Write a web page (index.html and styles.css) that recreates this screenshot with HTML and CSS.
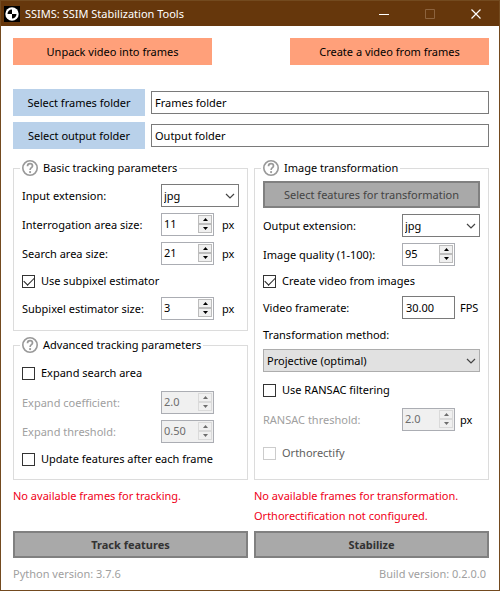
FILE: index.html
```html
<!DOCTYPE html>
<html lang="en">
<head>
<meta charset="utf-8">
<title>SSIMS: SSIM Stabilization Tools</title>
<link rel="stylesheet" href="styles.css">
</head>
<body>
<svg class="defs" aria-hidden="true">
  <symbol id="chevron" viewBox="0 0 10 6"><path d="M1 1l4 4 4-4" fill="none" stroke="currentColor" stroke-width="1.2"/></symbol>
  <symbol id="up" viewBox="0 0 5 3"><path d="M0 3L2.500 0 5 3z" fill="currentColor"/></symbol>
  <symbol id="down" viewBox="0 0 5 3"><path d="M0 0h5L2.500 3z" fill="currentColor"/></symbol>
  <symbol id="help" viewBox="0 0 16 16"><circle cx="8" cy="8" r="7.200" fill="none" stroke="#999" stroke-width="1.600"/><path d="M5.500 6.200C5.500 4.400 6.500 3.700 8 3.700s2.500.8 2.500 2.200c0 1.800-2.400 1.800-2.400 4" fill="none" stroke="#999" stroke-width="1.700"/><circle cx="8.100" cy="12.100" r="1.100" fill="#999"/></symbol>
</svg>
<div class="window">
  <header class="titlebar">
    <svg class="logo" viewBox="0 0 16 16" aria-hidden="true"><path d="M0 0h16v16H0z" fill="#000"/><circle cx="8" cy="8" r="6.700" fill="#fff"/><path d="M8 8V3.500A4.500 4.500 0 0 0 3.500 8zM8 8v4.500A4.500 4.500 0 0 0 12.500 8z" fill="#000"/></svg>
    <h1>SSIMS: SSIM Stabilization Tools</h1>
    <button class="caption" aria-label="Minimize"><svg viewBox="0 0 10 10"><path d="M0 5.500h10" stroke="#fff"/></svg></button>
    <button class="caption" aria-label="Maximize" disabled><svg viewBox="0 0 10 10"><path d="M.5.5h9v9h-9z" fill="none" stroke="#8c633e"/></svg></button>
    <button class="caption" aria-label="Close"><svg viewBox="0 0 10 10"><path d="M.5.500l9 9M9.500.500l-9 9" stroke="#fff" stroke-width="1.200"/></svg></button>
  </header>
  <main>
    <div class="video-actions">
      <button class="btn salmon">Unpack video into frames</button>
      <button class="btn salmon">Create a video from frames</button>
    </div>
    <div class="folders">
      <button class="btn blue">Select frames folder</button>
      <input class="text" type="text" aria-label="Frames folder" value="Frames folder">
      <button class="btn blue">Select output folder</button>
      <input class="text" type="text" aria-label="Output folder" value="Output folder">
    </div>
    <div class="columns">
      <div class="column">
        <fieldset>
          <legend><svg><use href="#help"/></svg>Basic tracking parameters</legend>
          <div class="rows">
            <div class="row"><label for="in-ext">Input extension:</label><span class="combo"><select id="in-ext"><option>jpg</option></select><svg><use href="#chevron"/></svg></span></div>
            <div class="row"><label for="ia">Interrogation area size:</label><span class="spin"><input id="ia" type="number" value="11"><span class="arrows"><button aria-label="Increase"><svg><use href="#up"/></svg></button><button aria-label="Decrease"><svg><use href="#down"/></svg></button></span></span><span class="unit">px</span></div>
            <div class="row"><label for="sa">Search area size:</label><span class="spin"><input id="sa" type="number" value="21"><span class="arrows"><button aria-label="Increase"><svg><use href="#up"/></svg></button><button aria-label="Decrease"><svg><use href="#down"/></svg></button></span></span><span class="unit">px</span></div>
            <label class="check"><input type="checkbox" checked>Use subpixel estimator</label>
            <div class="row"><label for="se">Subpixel estimator size:</label><span class="spin"><input id="se" type="number" value="3"><span class="arrows"><button aria-label="Increase"><svg><use href="#up"/></svg></button><button aria-label="Decrease"><svg><use href="#down"/></svg></button></span></span><span class="unit">px</span></div>
          </div>
        </fieldset>
        <fieldset class="grow">
          <legend><svg><use href="#help"/></svg>Advanced tracking parameters</legend>
          <div class="rows">
            <label class="check roomy"><input type="checkbox">Expand search area</label>
            <div class="row off"><label for="ec">Expand coefficient:</label><span class="spin"><input id="ec" type="number" step="0.1" value="2.0" disabled><span class="arrows"><button aria-label="Increase" disabled><svg><use href="#up"/></svg></button><button aria-label="Decrease" disabled><svg><use href="#down"/></svg></button></span></span></div>
            <div class="row off"><label for="et">Expand threshold:</label><span class="spin"><input id="et" type="number" step="0.01" value="0.50" disabled><span class="arrows"><button aria-label="Increase" disabled><svg><use href="#up"/></svg></button><button aria-label="Decrease" disabled><svg><use href="#down"/></svg></button></span></span></div>
            <label class="check"><input type="checkbox">Update features after each frame</label>
          </div>
        </fieldset>
      </div>
      <div class="column">
        <fieldset class="transform grow">
          <legend><svg><use href="#help"/></svg>Image transformation</legend>
          <div class="rows">
            <button class="btn gray" disabled>Select features for transformation</button>
            <div class="row"><label for="out-ext">Output extension:</label><span class="combo"><select id="out-ext"><option>jpg</option></select><svg><use href="#chevron"/></svg></span></div>
            <div class="row"><label for="iq">Image quality (1-100):</label><span class="spin"><input id="iq" type="number" value="95"><span class="arrows"><button aria-label="Increase"><svg><use href="#up"/></svg></button><button aria-label="Decrease"><svg><use href="#down"/></svg></button></span></span></div>
            <label class="check snug"><input type="checkbox" checked>Create video from images</label>
            <div class="row"><label for="fps">Video framerate:</label><input class="text short" id="fps" type="text" value="30.00"><span class="unit">FPS</span></div>
            <label class="heading" for="method">Transformation method:</label>
            <span class="combo flat"><select id="method"><option>Projective (optimal)</option></select><svg><use href="#chevron"/></svg></span>
            <label class="check roomy"><input type="checkbox">Use RANSAC filtering</label>
            <div class="row off"><label for="rt">RANSAC threshold:</label><span class="spin"><input id="rt" type="number" step="0.1" value="2.0" disabled><span class="arrows"><button aria-label="Increase" disabled><svg><use href="#up"/></svg></button><button aria-label="Decrease" disabled><svg><use href="#down"/></svg></button></span></span><span class="unit">px</span></div>
            <label class="check last dim"><input type="checkbox" disabled>Orthorectify</label>
          </div>
        </fieldset>
      </div>
    </div>
    <div class="status">
      <p>No available frames for tracking.</p>
      <p>No available frames for transformation.<br>Orthorectification not configured.</p>
    </div>
    <div class="run">
      <button class="btn gray strong" disabled>Track features</button>
      <button class="btn gray strong" disabled>Stabilize</button>
    </div>
    <footer><span>Python version: 3.7.6</span><span>Build version: 0.2.0.0</span></footer>
  </main>
</div>
</body>
</html>
```
FILE: styles.css
```css
* { box-sizing: border-box; }

body {
  margin: 0;
  background: #fff;
  color: #000;
  font: 11px/16px "Segoe UI", "Noto Sans", sans-serif;
}

button, input, select { font: inherit; color: inherit; margin: 0; }
h1, p { margin: 0; font: inherit; }
.defs { position: absolute; width: 0; height: 0; }

.window {
  min-height: 100vh;
  border: 1px solid #734a1f;
  border-top-width: 0;
}

.titlebar {
  display: flex;
  align-items: center;
  height: 26px;
  padding-left: 3px;
  background: #66370c;
  border-top: 1px solid #734a1f;
  color: #fff;
}
.titlebar h1 { flex: 1; margin-left: 5px; white-space: nowrap; }
.logo { width: 16px; height: 16px; }
.caption {
  display: grid;
  place-items: center;
  width: 46px;
  height: 25px;
  padding: 0;
  border: 0;
  background: none;
}
.caption svg { width: 10px; height: 10px; }

main { padding: 12px 10px 0 12px; }

.btn {
  height: 27px;
  padding: 0;
  border: 0;
  white-space: nowrap;
}
.salmon { width: 199px; background: #ffa07a; }
.blue { background: #b9d1ea; }
.gray { border: 2px solid #808080; background: #a9a9a9; color: #444; }
.strong { font-weight: bold; color: #333; }

.video-actions { display: flex; justify-content: space-between; }

.folders {
  display: grid;
  grid-template-columns: 132px 1fr;
  align-items: center;
  gap: 6px;
  margin-top: 24px;
}

.text {
  width: 100%;
  min-width: 0;
  height: 23px;
  padding: 0 3px;
  border: 1px solid #7a7a7a;
  background: #fff;
}
.short { width: 53px; }

.columns, .status, .run {
  display: grid;
  grid-template-columns: 1fr 1fr;
  gap: 6px;
}
.columns { margin-top: 11px; }
.column { display: flex; flex-direction: column; gap: 6px; min-width: 0; }

fieldset {
  min-width: 0;
  margin: 0;
  padding: 8px 8px 10px;
  border: 1px solid #dcdcdc;
}
.grow { flex: 1; }
.transform { padding-top: 5px; }
legend {
  display: flex;
  align-items: center;
  gap: 5px;
  height: 16px;
  margin-left: -2px;
  padding: 0 2px;
  white-space: nowrap;
}
legend svg { width: 16px; height: 16px; }

.rows { display: flex; flex-direction: column; gap: 6px; }
.row {
  display: grid;
  grid-template-columns: 139px auto 1fr;
  align-items: center;
  height: 23px;
  white-space: nowrap;
}
.unit { padding-left: 8px; }
.transform .unit { padding-left: 5px; }
.off label { color: #a0a0a0; }

.check { display: flex; align-items: center; gap: 6px; height: 20px; white-space: nowrap; }
.snug { height: 18px; }
.roomy { height: 24px; }
.last { height: 32px; }
.dim { color: #606060; }
.check input {
  appearance: none;
  display: grid;
  place-items: center;
  width: 13px;
  height: 13px;
  border: 1px solid #333;
  background: #fff;
}
.check input:disabled { border-color: #ccc; }
.check input:checked::before {
  content: "";
  width: 9px;
  height: 5px;
  margin-bottom: 2px;
  border: solid #222;
  border-width: 0 0 1px 1px;
  transform: rotate(-45deg);
}
.heading { height: 18px; padding-top: 2px; }

.combo { position: relative; width: 78px; height: 23px; }
.combo select {
  appearance: none;
  display: block;
  width: 100%;
  height: 100%;
  padding: 0 20px 0 2px;
  border: 1px solid #7a7a7a;
  border-radius: 0;
  background: #fff;
}
.combo svg {
  position: absolute;
  top: 9px;
  right: 4px;
  width: 10px;
  height: 6px;
  color: #444;
  pointer-events: none;
}
.flat { width: 100%; }
.flat select { padding-left: 3px; border-color: #adadad; background: #e1e1e1; }

.spin {
  display: flex;
  width: 53px;
  height: 23px;
  padding: 1px;
  border: 1px solid #abadb3;
  background: #fff;
}
.spin input {
  appearance: textfield;
  flex: 1;
  min-width: 0;
  height: 17px;
  padding: 0 0 0 1px;
  border: 0;
  background: none;
}
.spin input::-webkit-inner-spin-button { display: none; }
.arrows { display: flex; flex-direction: column; width: 14px; }
.arrows button {
  display: grid;
  place-items: center;
  height: 9px;
  padding: 0;
  border: 1px solid #bcbcbc;
  background: #f0f0f0;
}
.arrows svg { width: 5px; height: 3px; }
.off .spin { background: #f0f0f0; color: #6d6d6d; }
.off .arrows button { border-color: #dadada; }

.status { min-height: 40px; margin-top: 6px; color: #f00018; line-height: 20px; white-space: nowrap; }
.run { margin-top: 5px; }
footer {
  display: flex;
  justify-content: space-between;
  padding: 8px 3px 0 0;
  color: #a0a0a0;
}
```
